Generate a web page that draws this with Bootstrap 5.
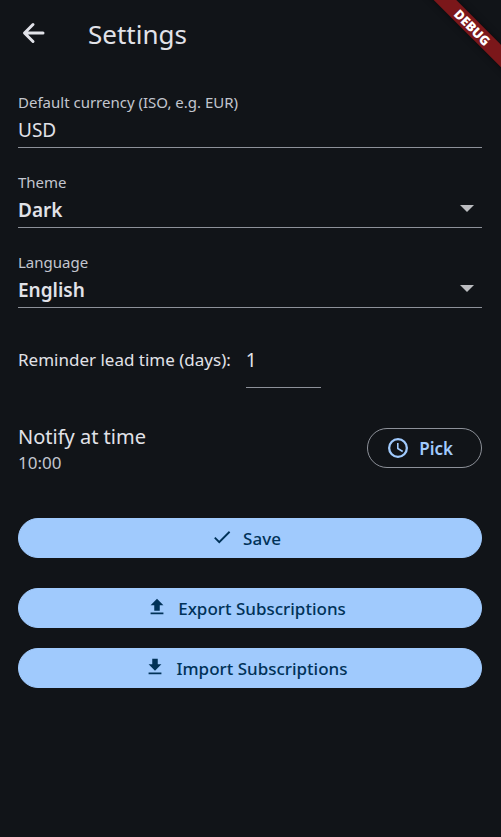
<!DOCTYPE html>
<html lang="en" data-bs-theme="dark">
<head>
<meta charset="utf-8">
<meta name="viewport" content="width=device-width, initial-scale=1">
<title>Settings</title>
<link href="https://cdn.jsdelivr.net/npm/bootstrap@5.3.0/dist/css/bootstrap.min.css" rel="stylesheet">
<style>
  body { background: #111418; color: #e1e2e8; font-family: "Noto Sans", "Open Sans", sans-serif; font-size: 17px; line-height: 24px; }
  svg { display: block; fill: currentColor; flex: none; }
  .app-bar { height: 68px; padding: 0 18px 0 20px; gap: 42px; }
  .app-title { font-size: 26px; line-height: 36px; font-weight: 400; color: #e1e2e8; }
  .back-btn { color: #e1e2e8; }
  .back-btn svg { margin-top: -2px; }
  .settings-form { padding: 24px 19px 24px 18px; gap: 24px; }
  .field-label { font-size: 15px; line-height: 20px; color: #c3c6cf; }
  .field-box { height: 36px; border: 0; border-bottom: 1px solid #8d9199; border-radius: 0; background: transparent; color: #e1e2e8; padding: 0; font-size: 19px; line-height: 24px; outline: 0; }
  .field-select { appearance: none; font-weight: 600; }
  .field-select option { background: #111418; }
  .select-arrow { right: 8px; top: 13px; pointer-events: none; color: #bcbdc0; }
  .days-row { gap: 15px; }
  .days-box { width: 75px; height: 56px; }
  .notify-row { margin-top: 10px; }
  .notify-title { font-size: 20px; line-height: 26px; padding-top: 2px; }
  .notify-time { color: #c3c6cf; line-height: 26px; }
  .pill { height: 40px; font-size: 17px; font-weight: 500; padding: 0 28px 0 20px; }
  .pill-outline { --bs-btn-color: #a0cafd; --bs-btn-border-color: #8d9199; --bs-btn-hover-color: #a0cafd; --bs-btn-hover-bg: #1d2632; --bs-btn-hover-border-color: #8d9199; font-weight: 600; gap: 9px; padding-left: 18px; margin-top: -2px; }
  .pill-fill { --bs-btn-color: #003258; --bs-btn-bg: #a0cafd; --bs-btn-border-color: #a0cafd; --bs-btn-hover-color: #003258; --bs-btn-hover-bg: #b0d3fe; --bs-btn-hover-border-color: #b0d3fe; gap: 10px; }
  .pill span { padding-top: 2px; }
  .pill-fill svg { margin-top: -2px; }
  .actions { margin-top: 18px; gap: 20px; }
  .save-btn { margin-bottom: 10px; }
  .ribbon-corner { width: 90px; height: 90px; pointer-events: none; }
  .ribbon { width: 140px; height: 16px; right: -42px; top: 20px; transform: rotate(45deg); background: #7b171a; box-shadow: 0 0 6px rgba(0,0,0,.5); color: #fff; font-size: 13px; line-height: 16px; font-weight: 900; }
  .ribbon span { margin-right: 2px; }
</style>
</head>
<body>
<header class="app-bar d-flex align-items-center">
  <button type="button" class="btn back-btn p-0 border-0" aria-label="Back">
    <svg width="26" height="26" viewBox="0 0 26 26"><path d="M23 13H5M13 4.500L4.500 13L13 21.500" fill="none" stroke="currentColor" stroke-width="3" stroke-linecap="round" stroke-linejoin="round"/></svg>
  </button>
  <h1 class="app-title m-0">Settings</h1>
</header>
<div class="ribbon-corner position-absolute top-0 end-0 overflow-hidden">
  <div class="ribbon position-absolute text-center"><span>DEBUG</span></div>
</div>
<main>
  <form class="settings-form d-flex flex-column">
    <div>
      <label class="field-label d-block" for="currency">Default currency (ISO, e.g. EUR)</label>
      <input class="field-box d-block w-100" id="currency" type="text" value="USD">
    </div>
    <div>
      <label class="field-label d-block" for="theme">Theme</label>
      <div class="position-relative">
        <select class="field-box field-select d-block w-100" id="theme"><option>Dark</option><option>Light</option></select>
        <svg class="select-arrow position-absolute" width="14" height="7" viewBox="0 0 14 7"><path d="M0 0H14L7 7Z"/></svg>
      </div>
    </div>
    <div>
      <label class="field-label d-block" for="language">Language</label>
      <div class="position-relative">
        <select class="field-box field-select d-block w-100" id="language"><option>English</option></select>
        <svg class="select-arrow position-absolute" width="14" height="7" viewBox="0 0 14 7"><path d="M0 0H14L7 7Z"/></svg>
      </div>
    </div>
    <div class="days-row d-flex align-items-center">
      <label for="days">Reminder lead time (days):</label>
      <input class="field-box days-box" id="days" type="text" inputmode="numeric" value="1">
    </div>
    <div class="notify-row d-flex justify-content-between align-items-center">
      <div>
        <div class="notify-title">Notify at time</div>
        <div class="notify-time">10:00</div>
      </div>
      <button type="button" class="btn pill pill-outline rounded-pill d-flex align-items-center">
        <svg width="24" height="24" viewBox="0 0 24 24"><path d="M12 2a10 10 0 1 0 0 20 10 10 0 0 0 0-20zm0 17.700a7.700 7.700 0 1 1 0-15.400 7.700 7.700 0 0 1 0 15.400zM12.600 7H11v6l5.250 3.150.9-1.400-4.550-2.700z"/></svg>
        <span>Pick</span>
      </button>
    </div>
    <div class="actions d-grid">
      <button type="submit" class="btn pill pill-fill save-btn rounded-pill d-flex align-items-center justify-content-center">
        <svg width="22" height="22" viewBox="0 0 24 24"><path d="M9 16.170L4.830 12l-1.420 1.410L9 19 21 7l-1.410-1.410z"/></svg>
        <span>Save</span>
      </button>
      <button type="button" class="btn pill pill-fill rounded-pill d-flex align-items-center justify-content-center">
        <svg width="22" height="22" viewBox="0 0 24 24"><path d="M9 16h6v-6h4l-7-7-7 7h4zM5 18h14v2H5z"/></svg>
        <span>Export Subscriptions</span>
      </button>
      <button type="button" class="btn pill pill-fill rounded-pill d-flex align-items-center justify-content-center">
        <svg width="22" height="22" viewBox="0 0 24 24"><path d="M19 9h-4V3H9v6H5l7 7zM5 18v2h14v-2z"/></svg>
        <span>Import Subscriptions</span>
      </button>
    </div>
  </form>
</main>
<script src="https://cdn.jsdelivr.net/npm/bootstrap@5.3.0/dist/js/bootstrap.bundle.min.js"></script>
</body>
</html>
